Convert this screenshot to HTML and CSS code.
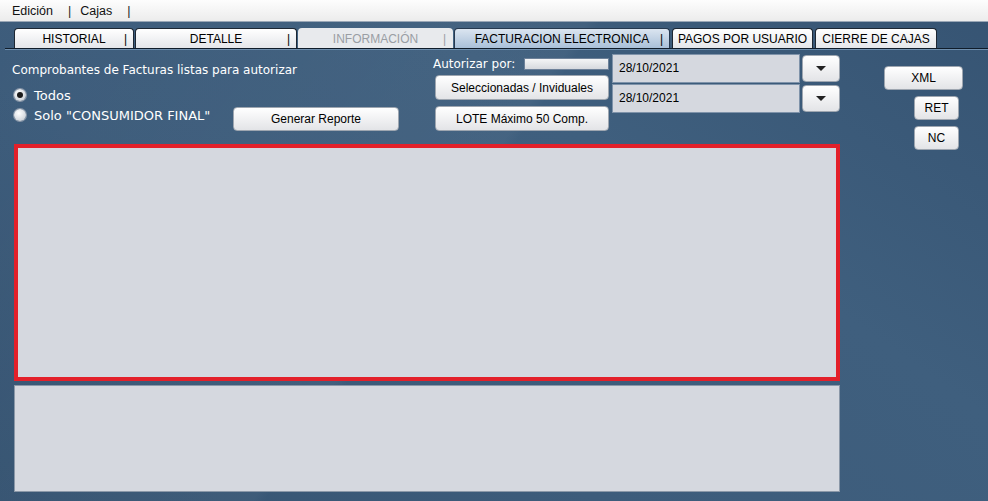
FILE: index.html
```html
<!DOCTYPE html>
<html lang="es">
<head>
    <meta charset="UTF-8">
    <title>Facturacion Electronica</title>
    <link rel="stylesheet" href="styles.css">
</head>
<body>
    <div class="menubar">
        <span class="menu-item">Edición</span>
        <span class="menu-sep">|</span>
        <span class="menu-item">Cajas</span>
        <span class="menu-sep">|</span>
    </div>

    <div class="tabs">
        <div class="tab tab-historial">HISTORIAL <span class="sep">|</span></div>
        <div class="tab tab-detalle">DETALLE <span class="sep">|</span></div>
        <div class="tab tab-info disabled">INFORMACIÓN <span class="sep">|</span></div>
        <div class="tab tab-fact active">FACTURACION ELECTRONICA <span class="sep">|</span></div>
        <div class="tab tab-pagos">PAGOS POR USUARIO</div>
        <div class="tab tab-cierre">CIERRE DE CAJAS</div>
    </div>

    <div class="content">
        <div class="main">
            <div class="toolbar">
                <div class="filter">
                    <div class="title">Comprobantes de Facturas listas para autorizar</div>
                    <label class="radio"><span class="dot checked"></span>Todos</label>
                    <label class="radio"><span class="dot"></span>Solo "CONSUMIDOR FINAL"</label>
                </div>
                <div class="report">
                    <button class="btn btn-report">Generar Reporte</button>
                </div>
                <div class="auth">
                    <div class="auth-row">
                        <span class="auth-label">Autorizar por:</span>
                        <span class="auth-field"></span>
                    </div>
                    <button class="btn btn-wide">Seleccionadas / Inviduales</button>
                    <button class="btn btn-wide">LOTE Máximo 50 Comp.</button>
                </div>
                <div class="dates">
                    <div class="date-row">
                        <div class="date-field">28/10/2021</div>
                        <button class="btn btn-drop"><span class="arrow"></span></button>
                    </div>
                    <div class="date-row">
                        <div class="date-field">28/10/2021</div>
                        <button class="btn btn-drop"><span class="arrow"></span></button>
                    </div>
                </div>
            </div>

            <div class="panel panel-list"></div>
            <div class="panel panel-detail"></div>
        </div>

        <div class="side">
            <button class="btn btn-xml">XML</button>
            <button class="btn btn-small">RET</button>
            <button class="btn btn-small">NC</button>
        </div>
    </div>
</body>
</html>
```

FILE: styles.css
```css
body {
    margin: 0;
    width: 988px;
    height: 501px;
    overflow: hidden;
    font-family: "Liberation Sans", Arial, sans-serif;
    font-size: 12px;
    color: #000;
    background-color: #3c5b7a;
    background-image:
        linear-gradient(125deg, rgba(255,255,255,0) 0%, rgba(255,255,255,0.03) 45%, rgba(0,0,0,0) 46%),
        linear-gradient(35deg, #355371 0%, #3d5c7b 35%, #3f5f7e 65%, #365473 100%);
}
.menubar {
    height: 21px;
    display: flex;
    align-items: center;
    padding-left: 12px;
    font-size: 12.5px;
    color: #111;
    background: linear-gradient(#fdfdfd, #ececec);
    border-bottom: 1px solid #9aa7b6;
}
.menu-sep {
    color: #222;
    margin: 0 9px 0 15px;
}
.tabs {
    display: flex;
    padding: 5px 0 0 9px;
    margin-left: 5px;
    border-bottom: 1px solid #0f1c2a;
    box-shadow: 0 1px 0 #6f8fae;
    height: 21px;
}
.tab {
    height: 20px;
    box-sizing: border-box;
    border: 1px solid #1d2733;
    border-bottom: none;
    border-radius: 4px 4px 0 0;
    background: linear-gradient(#ffffff, #e4e6ea);
    font-size: 12px;
    line-height: 20px;
    text-align: center;
    white-space: nowrap;
    position: relative;
    top: 1px;
}
.tab .sep {
    position: absolute;
    right: 6px;
}
.tab-historial { width: 120px; }
.tab-detalle { width: 162px; margin-left: 1px; }
.tab-info { width: 155px; margin-left: 1px; }
.tab-fact { width: 216px; margin-left: 1px; }
.tab-pagos { width: 141px; margin-left: 2px; }
.tab-cierre { width: 122px; margin-left: 2px; }
.tab.disabled {
    border-color: transparent;
    background: #e8eaed;
    color: #9a9ea4;
}
.tab.active {
    background: linear-gradient(#dbe5f0, #a9c0d9);
    border-color: #26394f;
}
.content {
    display: flex;
    padding-left: 14px;
}
.main {
    width: 826px;
}
.toolbar {
    display: flex;
    height: 95px;
}
.filter {
    width: 221px;
    margin-left: -2px;
    padding-top: 13px;
    color: #fff;
}
.title {
    font-family: "DejaVu Sans", sans-serif;
    font-size: 12px;
    height: 16px;
    line-height: 16px;
    margin-bottom: 7px;
    white-space: nowrap;
}
.radio {
    display: flex;
    align-items: center;
    height: 20px;
    font-family: "DejaVu Sans", sans-serif;
    font-size: 13px;
    white-space: nowrap;
}
.dot {
    width: 12px;
    height: 12px;
    border-radius: 50%;
    margin: 0 8px 0 2px;
    background: radial-gradient(circle at 40% 35%, #ffffff, #d2d6dc 70%, #a9b0ba);
    box-shadow: 0 0 0 1px #8a97a8;
    position: relative;
}
.dot.checked::after {
    content: "";
    position: absolute;
    left: 3px;
    top: 3px;
    width: 6px;
    height: 6px;
    border-radius: 50%;
    background: #1b1b1b;
}
.report {
    width: 166px;
    display: flex;
    align-items: flex-end;
    padding-bottom: 13px;
}
.btn {
    font-family: "Liberation Sans", Arial, sans-serif;
    font-size: 12px;
    color: #000;
    background: linear-gradient(#ffffff, #e3e4e7);
    border: 1px solid #9ea6b0;
    border-radius: 4px;
    padding: 0;
    box-sizing: border-box;
}
.btn-report {
    width: 166px;
    height: 24px;
}
.auth {
    width: 176px;
    margin-left: 34px;
    display: flex;
    flex-direction: column;
    align-items: flex-end;
    padding-top: 8px;
}
.auth-row {
    width: 176px;
    display: flex;
    align-items: center;
    justify-content: space-between;
    height: 14px;
    margin-bottom: 4px;
}
.auth-label {
    font-family: "DejaVu Sans", sans-serif;
    font-size: 12px;
    color: #fff;
    white-space: nowrap;
}
.auth-field {
    width: 83px;
    height: 10px;
    background: linear-gradient(#f4f5f6, #d6d9de);
    border: 1px solid #6d8199;
}
.btn-wide {
    width: 174px;
    height: 25px;
    margin-bottom: 6px;
}
.dates {
    width: 228px;
    margin-left: 3px;
    padding-top: 5px;
}
.date-row {
    display: flex;
    align-items: center;
    gap: 2px;
}
.date-row + .date-row {
    margin-top: 1px;
}
.date-field {
    width: 188px;
    height: 29px;
    box-sizing: border-box;
    background: #d5d8df;
    border: 1px solid #7f93aa;
    padding-left: 6px;
    line-height: 27px;
}
.btn-drop {
    width: 38px;
    height: 27px;
    display: flex;
    align-items: center;
    justify-content: center;
}
.arrow {
    width: 0;
    height: 0;
    border-left: 5px solid transparent;
    border-right: 5px solid transparent;
    border-top: 5px solid #222;
}
.panel {
    background: #d5d8df;
    box-sizing: border-box;
}
.panel-list {
    height: 237px;
    border: 4px solid #e3202a;
}
.panel-detail {
    height: 107px;
    margin-top: 4px;
    border: 1px solid #8b98a8;
}
.side {
    display: flex;
    flex-direction: column;
    align-items: flex-end;
    width: 123px;
    padding-top: 17px;
}
.btn-xml {
    width: 79px;
    height: 24px;
    margin-bottom: 6px;
}
.btn-small {
    width: 45px;
    height: 24px;
    margin-right: 4px;
    margin-bottom: 6px;
}
```
